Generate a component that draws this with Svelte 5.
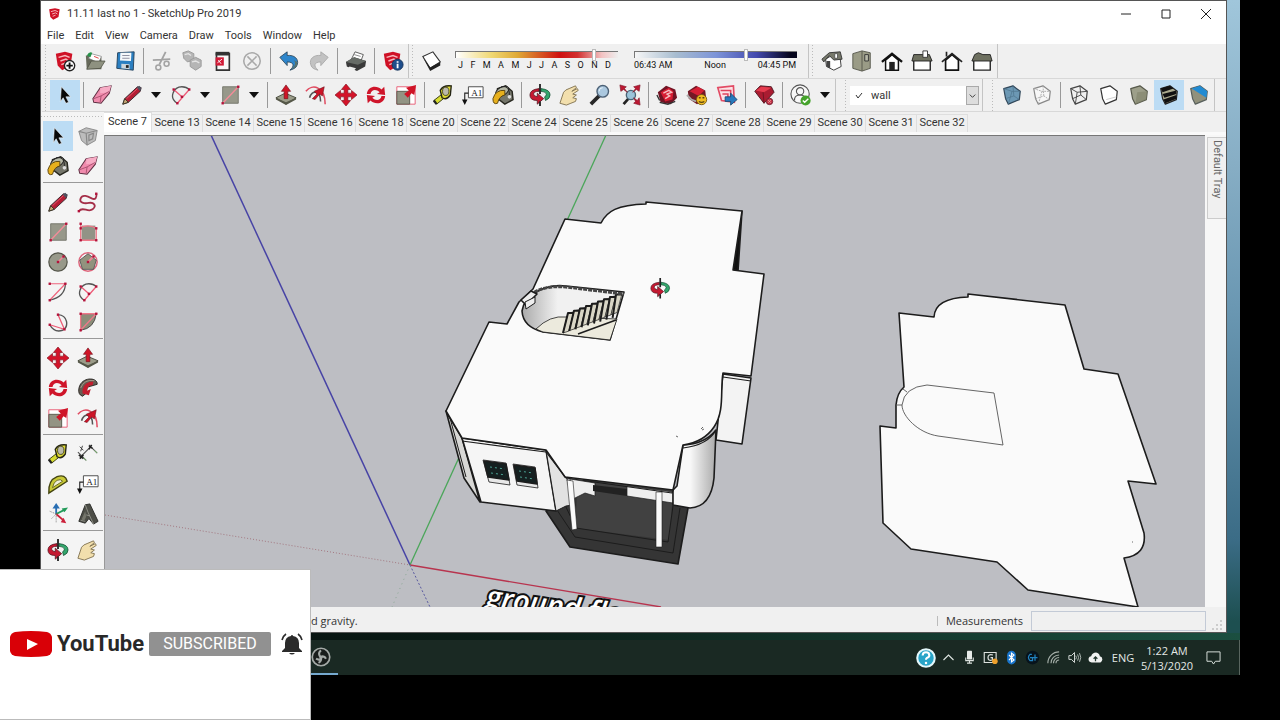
<script>
  let scene = $state('Scene 7');
  let month = $state(86);
  let hour = $state(69);
  let material = $state('wall');

  const menus = ['File', 'Edit', 'View', 'Camera', 'Draw', 'Tools', 'Window', 'Help'];
  const scenes = [7, 13, 14, 15, 16, 18, 20, 22, 24, 25, 26, 27, 28, 29, 30, 31, 32];
  const months = 'JFMAMJJASOND'.split('');

  // '|' is a separator, 'v' a drop-down arrow
  const standardBar = ['new', 'open', 'save', '|', 'cut', 'copy', 'paste', 'erase', '|', 'undo', 'redo', '|', 'print', '|', 'info'];
  const viewBar = ['iso', 'top', 'front', 'right', 'back', 'left'];
  const mainBar = [
    'select', '|', 'eraser', 'pencil', 'v', 'arc2', 'v', 'rect', 'v', '|',
    'push', 'offset', 'move', 'rotate', 'scale', '|', 'tape', 'text', 'paint', '|',
    'orbit', 'pan', 'zoom', 'extents', '|', 'warehouse', 'extwarehouse', 'layout', '|', 'extmanager', '|', 'account', 'v'
  ];
  const styleBar = ['xray', 'backedges', '|', 'wireframe', 'hidden', 'shaded', 'textured', 'mono'];
  const toolbox = [
    ['select', 'component', 'paint', 'eraser'],
    ['pencil', 'freehand', 'rect', 'rotrect', 'circle', 'polygon', 'arc', 'arc2', 'arc3', 'pie'],
    ['move', 'push', 'rotate', 'follow', 'scale', 'offset'],
    ['tape', 'dimension', 'protractor', 'text', 'axes', 'text3d'],
    ['orbit', 'pan']
  ];
  const active = ['select', 'textured'];

  const dots = (list) => list.map(([x, y]) => `<rect x="${x - 1.3}" y="${y - 1.3}" width="2.6" height="2.6" fill="#b3123a"/>`).join('');
  const cube = (fill, stroke, extra = '') =>
    `<path d="M3 5 13 2 21 8 20 17 8 22 5 16Z" fill="${fill}" stroke="${stroke}" stroke-width="1.3" stroke-linejoin="round"/>${extra}`;
  const suLogo = '<path d="M2 4 12 2 20 4 18 17 9 22 4 17Z" fill="#cf1126"/><path d="M5 8 12 6 17 8M7 12 13 10 16 12M8 16 13 14" fill="none" stroke="#f6b8bd" stroke-width="1.6"/>';

  const icons = {
    logo: suLogo,
    new: suLogo + '<circle cx="17" cy="17" r="5.6" fill="#fff" stroke="#222" stroke-width="1.5"/><path d="M13.5 17h7M17 13.5v7" stroke="#111" stroke-width="2"/>',
    open: '<path d="M2 6h6l2 2h9v13H3Z" fill="#66695a"/><path d="M5 9 8 4l11 3-3 7Z" fill="#fff" stroke="#777" stroke-width=".7"/><path d="M3 6q3-5 6-3l-2 5Z" fill="#28924a"/><path d="M3 21 8 12h15l-5 8Z" fill="#8e9180" stroke="#4b4d40" stroke-width=".8"/><path d="m11 7 5 2" stroke="#d33" />',
    save: '<path d="M4 3 22 2 21 22 3 20Z" fill="#2b7fc1" stroke="#24415a"/><path d="M7 3h12l-.5 9-12-.5Z" fill="#f5f8fa"/><path d="M9 6h8M9 9h8" stroke="#889"/><path d="m8 15 9 .5V21l-9-1Z" fill="#cdd6dc"/><path d="M13 16.500h3v3h-3Z" fill="#222"/>',
    cut: '<path d="M16 2 9 16M2 11l19-1" stroke="#a3a3a3" stroke-width="2"/><circle cx="8" cy="19" r="2.700" fill="none" stroke="#a3a3a3" stroke-width="1.700"/><circle cx="17" cy="15" r="2.700" fill="none" stroke="#a3a3a3" stroke-width="1.700"/>',
    copy: '<path d="m2 3 6-2 6 3v7l-7 2-4-4Z" fill="#b5b5b5" stroke="#999"/><path d="m10 11 6-3 6 3v7l-6 4-6-4Z" fill="#b5b5b5" stroke="#999"/><path d="m4 5 4-1 3 2M12 13l4-1 4 2" stroke="#e4e4e4" fill="none" stroke-width="1.500"/>',
    paste: '<path d="M6 4h14v18H6Z" fill="#f8f8f8" stroke="#333" stroke-width="1.800"/><path d="M5 2h15v4H5Z" fill="#333"/><path d="M5 8h9v9H5Z" fill="#d01a36"/><path d="m7 14 5-4m-4 1 3 4" stroke="#fff"/>',
    erase: '<circle cx="12" cy="12" r="9" fill="none" stroke="#a9a9a9" stroke-width="1.700"/><path d="m7 7 10 10M17 7 7 17" stroke="#a9a9a9" stroke-width="1.700"/>',
    undo: '<path d="m2 8 8-6v4c8-1 13 4 11 10-1 4-5 5-8 6 5-4 5-9-3-9v4Z" fill="#2e86cc" stroke="#2b4456" stroke-width=".9"/><path d="M14 21c5-3 6-7 3-10l4 2q1 6-7 8Z" fill="#56726f"/>',
    redo: '<path d="m22 8-8-6v4C6 5 1 10 3 16c1 4 4 5 8 6-5-4-5-9 3-9v4Z" fill="#c2c2c2" stroke="#aaa"/>',
    print: '<path d="m7 10 4-8 9 3-3 8Z" fill="#fff" stroke="#555"/><path d="m1 13 9-5 13 4-1 6-9 5-11-5Z" fill="#3a3a3a"/><path d="m1 13 9-5 13 4-9 4Z" fill="#666b66"/><path d="m5 18 7 2-2 2-7-2Z" fill="#eee"/><path d="m10 5 7 2" stroke="#888"/>',
    info: suLogo + '<circle cx="17" cy="16" r="6" fill="#1f4e8c" stroke="#17335a"/><path d="M17 12.200v1.800M17 15v5" stroke="#fff" stroke-width="2"/>',
    shadow: '<path d="m2 7 11-5 8 11-11 7Z" fill="#fff" stroke="#333" stroke-width="1.200"/><path d="m2 8 8 11 11-6v4l-11 6Z" fill="#222"/>',
    iso: '<path d="m5 10 1 8 8 4 8-4-1-8-6-6Z" fill="#fff" stroke="#333"/><path d="M1 10 9 3l12-1 2 8-9 1-5-5-6 7Z" fill="#77796b" stroke="#333"/><path d="M6 12h4v8l-4-2Z" fill="#444"/><path d="M15 4h3v5h-3Z" fill="#fff" stroke="#444" stroke-width=".8"/>',
    top: '<path d="M2 4 12 1l9 2v17l-9 3-10-3Z" fill="#9a9b86" stroke="#55564a"/><path d="M12 1v22" stroke="#55564a"/><path d="M15 5h4v7h-4Z" fill="#b8b9a8" stroke="#333"/>',
    front: '<path d="M5 11v11h14V11l-7-6Z" fill="#fff" stroke="#111" stroke-width="1.600"/><path d="m1 13 11-9 11 9" fill="none" stroke="#111" stroke-width="2.500"/><path d="M9 13h6v9H9Z" fill="#222"/>',
    right: '<path d="M3 11h18v11H3Z" fill="#fff" stroke="#222" stroke-width="1.500"/><path d="m1 12 2-7h17l3 7Z" fill="#6e7060" stroke="#222"/><path d="M13 1h5v7h-5Z" fill="#fff" stroke="#333"/>',
    back: '<path d="M5 11v11h14V11l-7-6Z" fill="#fff" stroke="#111" stroke-width="1.800"/><path d="m1 13 11-9 11 9M6 7V2" fill="none" stroke="#222" stroke-width="1.800"/>',
    left: '<path d="M3 11h18v11H3Z" fill="#fff" stroke="#222" stroke-width="1.500"/><path d="m1 12 3-7 4-2 5 2h8l2 7Z" fill="#6e7060" stroke="#222"/>',
    select: '<path d="m8 3 10 11h-5l3 6-3 1-3-6-3 4Z" fill="#080808" stroke="#fff" stroke-width=".6"/>',
    eraser: '<path d="m2 16 8-12 12-2-2 8-9 11-8-1Z" fill="#f08bad" stroke="#5f3043" stroke-width="1.100"/><path d="m10 4 12-2-2 7-10 1Z" fill="#f7acc5"/><path d="m3 16 8-3M10 20l1-7 9-5" stroke="#a8506f" fill="none"/>',
    pencil: '<path d="m2 22 2-6L18 3l4 1-1 4L8 20Z" fill="#b51d34" stroke="#35252a"/><path d="m2 22 2-6 4 4Z" fill="#c9a878" stroke="#332"/><path d="m17 4 4 4 1-4-2-2Z" fill="#4f5260"/><path d="m6 16 12-11" stroke="#e25a6c"/>',
    arc2: '<path d="M8 21C-2 15 4 3 13 3q5 0 8 3" fill="none" stroke="#555" stroke-width="1.400"/><path d="m4 6 9 8M8 21 21 6" stroke="#ee5c78" stroke-width="1.400"/>' + dots([[4, 6], [21, 6], [8, 21], [13, 14]]),
    rect: '<path d="M4 3h17v18H4Z" fill="#97988a" stroke="#74756a"/><path d="M4 21 21 3" stroke="#f38c98" stroke-width="1.500"/>' + dots([[4, 21], [21, 3]]),
    push: '<path d="m1 15 10-5 12 5-11 7Z" fill="#9b9c89" stroke="#44463a"/><path d="m1 15 11 5 11-5v2l-11 6-11-6Z" fill="#555748"/><path d="M12 1 7 8h3v8h4V8h3Z" fill="#cf1527" stroke="#74101a" stroke-width=".7"/>',
    offset: '<path d="M1 8C8-1 22 3 22 22" fill="none" stroke="#e04b60" stroke-width="1.700"/><path d="M5 15c2-9 12-8 12 4" fill="none" stroke="#555" stroke-width="1.700"/><path d="m8 16 5-5-3-3 11-5-2 10-3-2-5 6Z" fill="#cc1427" stroke="#650b18" stroke-width=".6"/>',
    move: '<path d="m12 0 5 6h-3v4h4V7l6 5-6 5v-3h-4v4h3l-5 6-5-6h3v-4H6v3l-6-5 6-5v3h4V6H7Z" fill="#d41329" stroke="#801320" stroke-width=".7"/>',
    rotate: '<path d="M2 11C3 2 13 1 18 6l3-3 1 9-9-1 3-2C12 5 7 6 6 11Z" fill="#cf152a"/><path d="M22 13c-1 9-11 10-16 5l-3 3-1-9 9 1-3 2c4 4 9 3 10-2Z" fill="#cf152a"/>',
    scale: '<path d="M2 3h20v19H2Z" fill="#fff" stroke="#e85a73"/><path d="M2 8h14v14H2Z" fill="#939484" stroke="#565749"/><path d="m10 11 5-4-3-3 11-3-2 11-3-2-4 5Z" fill="#cf1427"/>',
    tape: '<path d="m2 18 9-7 4 3-10 8Z" fill="#d6dc31" stroke="#33340b"/><path d="M9 7q3-6 12-5l-1 10q-4 6-9 3Z" fill="#deda33" stroke="#252515" stroke-width="1.500"/><ellipse cx="15" cy="8" rx="3.500" ry="4.500" fill="#bbb9aa" stroke="#43431f"/><path d="m2 18 3 4" stroke="#222" stroke-width="2.500"/>',
    text: '<path d="M7 3h16v12H7Z" fill="#fff" stroke="#444"/><path d="M7 10H3v9" fill="none" stroke="#222" stroke-width="1.200"/><path d="m0 17 3 6 3-6Z" fill="#111"/><text x="10" y="13" font-family="Liberation Serif, serif" font-size="10" fill="#222">A1</text>',
    paint: '<path d="m6 5 9-3 7 6 1 9-9 5-9-7Z" fill="#74756a" stroke="#282820" stroke-width="1.500"/><ellipse cx="11" cy="8" rx="8" ry="4.500" fill="#b5b7a6" stroke="#222" transform="rotate(-30 11 8)"/><path d="M14 7Q4 6 1 16q0 7 5 5 2-8 8-9Z" fill="#e7b01d" stroke="#56410d"/><path d="M10 3q10-2 9 11" fill="none" stroke="#222"/><circle cx="19" cy="14" r="2" fill="#ddd"/>',
    orbit: '<path d="M11 5Q1 6 1 12t8 6v4l7-6-7-6v4q-4-1-4-3 0-3 6-3Z" fill="#c51931" stroke="#501520" stroke-width=".8"/><path d="M13 5q10 1 10 7 0 4-5 6l-1-4q2-1 2-3-1-3-6-3Z" fill="#33a66c" stroke="#124b30" stroke-width=".8"/><path d="M12 0v11M12 19v5" stroke="#222" stroke-width="2"/>',
    pan: '<path d="m1 21 4-12Q7 6 11 5l7-3 1 2-5 4 6-3 1 2-6 4 4 1-4 3 4 1-1 3-5 2-5 2Z" fill="#f2dfad" stroke="#807250" stroke-width="1"/>',
    zoom: '<path d="m2 22 9-9" stroke="#282828" stroke-width="4"/><circle cx="15" cy="8" r="6.300" fill="#abc8df" stroke="#4c6176" stroke-width="1.500"/><path d="M11 8q0-4 4-4" stroke="#e9f4fb" fill="none"/>',
    extents: '<path d="M5 22 12 14" stroke="#222" stroke-width="3"/><circle cx="13" cy="12" r="5" fill="#9bc3d9" stroke="#496477" stroke-width="1.500"/><path d="m1 1 7 2-2 2 3 4-4-3-3 2ZM23 1l-7 2 2 2-3 4 4-3 3 2ZM23 23l-7-2 2-2-2-4 4 3 2-3Z" fill="#bd1832" stroke="#7f1628" stroke-width=".7"/>',
    warehouse: '<path d="m2 9 9-7 10 4 2 9-7 7-11-2Z" fill="#711323"/><path d="m5 9 9-5 5 4-1 9-8 2Z" fill="#d71c32"/><path d="m8 10 6-3 3 2-5 2 3 2-5 3" fill="none" stroke="#f5bdc0" stroke-width="1.500"/><path d="m4 20 9 2 8-3M1 12l3 6" stroke="#333" fill="none" stroke-width="1.500"/>',
    extwarehouse: '<path d="m2 8 9-6 10 5 1 9-10 6-9-6Z" fill="#731825"/><path d="m4 8 9-5 7 4-6 6Z" fill="#d71f35"/><path d="m1 12 5 5 5 2" stroke="#aaa" stroke-width="2" fill="none"/><circle cx="17" cy="17" r="5.600" fill="#f0bc22" stroke="#765b15"/><path d="M14 15h2m2 0h2M14 19q3 2 6 0" stroke="#5b4510" stroke-width="1.400" fill="none"/>',
    layout: '<path d="M2 4 19 2l1 18-14-2Z" fill="#fbe3e6" stroke="#e24b64" stroke-width="1.800"/><path d="M5 7h11v8M7 11h6v5" fill="none" stroke="#df445d" stroke-width="1.700"/><path d="M10 14h6v-4l7 7-7 6v-4h-6Z" fill="#2879bd" stroke="#204b75"/>',
    extmanager: '<path d="m2 8 6-6 12 1 3 6-11 12Z" fill="#aa1c31" stroke="#48151f"/><path d="m3 7 6-4 11 1-8 5Z" fill="#e53b4e"/><path d="m11 9 1 12" stroke="#6f1322"/><circle cx="18" cy="19" r="3.500" fill="#c73248" stroke="#702332"/><path d="m16.500 17.500 3 3m0-3-3 3" stroke="#e99"/>',
    account: '<circle cx="11" cy="11" r="10" fill="#f8f8f8" stroke="#555" stroke-width="1.200"/><circle cx="11" cy="8" r="4" fill="none" stroke="#555" stroke-width="1.200"/><path d="M5 18v-2q1-4 6-4t6 4v2" fill="none" stroke="#555" stroke-width="1.200"/><circle cx="17" cy="18" r="5.500" fill="#45a32b"/><path d="m14 18 2 2 4-4" fill="none" stroke="#fff" stroke-width="1.500"/>',
    xray: cube('#6c98b4', '#32485a', '<path d="m3 5 9 3 9 0M12 8l-4 14M5 16l9-3 6 4M13 2l1 11" fill="none" stroke="#4f768e" stroke-width=".8"/>'),
    backedges: cube('#f7f7f7', '#888', '<path d="m3 5 9 3 9 0M12 8l-4 14M5 16l9-3 6 4M13 2l1 11" fill="none" stroke="#aaa" stroke-dasharray="2 1"/>'),
    wireframe: cube('none', '#444', '<path d="m3 5 7 4 11-1M10 9 8 22M5 16l9-4 6 5M13 2l1 10" fill="none" stroke="#444"/>'),
    hidden: cube('#fff', '#333', '<path d="m9 17 11-3" stroke="#ccc"/>'),
    shaded: cube('#9d9f8a', '#57594b', '<path d="m10 9 11-1-1 9-12 5Z" fill="#85876f" opacity=".7"/>'),
    textured: cube('#aaa98d', '#222', '<path d="m3 5 10-3 4 3-12 4ZM5 11l15-4v4L7 15ZM6 17l14-5v4L8 21Z" fill="#111"/>'),
    mono: cube('#91917c', '#58605d', '<path d="m4 5 9-3 8 6-1 7Z" fill="#228bd2"/>'),
    component: '<path d="m2 7 8-4 12 3-2 11-9 5-6-5Z" fill="#bcbcbc" stroke="#888"/><path d="m2 7 8 2 12-3M10 9l1 13M13 11l5-2-1 6-4 2Z" fill="none" stroke="#888" stroke-width="1.300"/>',
    freehand: '<path d="M2 22C6 16 12 24 17 20s1-8-4-7-11 0-9-5 8-2 12 0 6-1 5-5" fill="none" stroke="#a52f49" stroke-width="2"/>' + dots([[2, 22], [21, 3]]),
    rotrect: '<path d="M5 5h15v16H5Z" fill="#929386"/><path d="M4 3v18h17V8Q13 3 4 7" fill="none" stroke="#ee7889" stroke-width="1.400"/>' + dots([[4, 3], [4, 8], [4, 21], [21, 21], [21, 8]]),
    circle: '<circle cx="12" cy="12" r="10" fill="#98998a" stroke="#55564b" stroke-width="1.300"/><path d="m12 12 6-6" stroke="#f28897" stroke-width="1.500"/>' + dots([[12, 12], [18, 6]]),
    polygon: '<circle cx="12" cy="12" r="10" fill="none" stroke="#de667c" stroke-width="1.600"/><path d="m12 3 9 7-3 10H6L3 10Z" fill="#92937e" stroke="#555"/><path d="m12 12 6-6" stroke="#f08493" stroke-width="2"/>' + dots([[12, 12], [18, 6]]),
    arc: '<path d="M3 21Q20 17 20 3" fill="none" stroke="#555" stroke-width="1.400"/><path d="M3 3h17L3 21" fill="none" stroke="#ee647c" stroke-width="1.300"/>' + dots([[3, 3], [20, 3], [3, 21]]),
    arc3: '<path d="M3 15q5 9 14 6c7-4 6-16-5-17" fill="none" stroke="#555" stroke-width="1.500"/><path d="M12 4 19 20 3 15" fill="none" stroke="#ed5c75" stroke-width="1.400"/>' + dots([[12, 4], [19, 20], [3, 15]]),
    pie: '<path d="M4 3h17Q19 19 4 21Z" fill="#8c8d79" stroke="#444"/><path d="M4 21 21 3H4Z" fill="none" stroke="#ee7989" stroke-width="1.500"/>' + dots([[4, 3], [21, 3], [4, 21]]),
    follow: '<path d="M2 13C4-1 23 0 22 8l-7 2q-6 1-4 7l-5 4q-5-2-4-8Z" fill="#655e54" stroke="#252320"/><path d="M6 14Q8 5 18 5l-1 4Q11 9 11 15l4-2-2 7-7-2Z" fill="#c31c2e"/><path d="M4 12Q8 2 19 4" fill="none" stroke="#a89b8b"/>',
    dimension: '<path d="m4 15 11-11M1 10l9 9M13 2l9 9" stroke="#555" stroke-width="1.200"/><path d="m2 13 5 4M3 17l4-4M13 3l4 3m-4 1 3-5" stroke="#222" stroke-width="1.700"/><path d="m19 8 3 3M7 16l3 3" stroke="#75b968"/><path d="m3 4 4 4M6 3 4 9" stroke="#333"/>',
    protractor: '<path d="M2 22 22 9Q20 1 11 4 1 8 2 22Z" fill="#c8c937" stroke="#424310" stroke-width="1.500"/><path d="M6 16 17 9q-2-3-6-1t-5 8Z" fill="#f0f0d8" stroke="#626318"/>',
    axes: '<path d="M10 12V3" stroke="#286eb3" stroke-width="2"/><path d="m10 12 10-5" stroke="#229b59" stroke-width="2"/><path d="m10 12 8 7" stroke="#cc213a" stroke-width="2"/><path d="M10 0 6 6h8Z" fill="#286eb3"/><path d="m23 5-7 1 3 4Z" fill="#229b59"/><path d="m21 22-6-1 3-5Z" fill="#cc213a"/><path d="m3 9 7 3-5 5M10 12v9" stroke="#777" stroke-dasharray="1 1" fill="none"/>',
    text3d: '<path d="m9 2 5-1 9 19-5 3-5-6-4 5-7-2Z" fill="#4d4e47" stroke="#2a2b27"/><path d="m9 2 3 8 6 13M10 13l4 1M4 19l5 1" stroke="#92938a" fill="none"/><path d="m9 9-4 9 3 1 2-4Z" fill="#74756b"/>'
  };

  const trayIcons = {
    'Get Help': '<circle cx="12" cy="12" r="10.500" fill="#28a4c8" stroke="#e4f7fb" stroke-width="2.500"/><path d="M8 9q0-4 4-4t4 4q0 2-3 3-1 .8-1 2" fill="none" stroke="#fff" stroke-width="2.500"/><circle cx="12" cy="18" r="1.500" fill="#fff"/>',
    'Show hidden icons': '<path d="m4 16 8-8 8 8" fill="none" stroke="#dfe6e2" stroke-width="1.800"/>',
    'Microphone': '<rect x="8" y="1" width="8" height="14" rx="1" fill="#e7ebe8"/><path d="M6 12v5h12v-5M12 16v6M8 21h8" fill="none" stroke="#dce1de" stroke-width="1.800"/>',
    'Screen capture': '<path d="M2 4h19v16H2Z" fill="none" stroke="#dce1de" stroke-width="1.800"/><path d="M16 8q-8-2-8 4t7 4v-4h-3" fill="none" stroke="#dce1de" stroke-width="2"/><circle cx="19" cy="18" r="4.500" fill="#eda02c"/>',
    'Bluetooth': '<rect x="5" y="1" width="14" height="22" rx="7" fill="#1975cc"/><path d="m8 8 8 8-4 3V5l4 3-8 8" fill="none" stroke="#fff" stroke-width="1.800"/>',
    'Logitech G': '<circle cx="12" cy="12" r="11" fill="#07131c"/><path d="M11 7H8q-5 5 0 10h4v-5H8M16 7v10M12 12h8" fill="none" stroke="#2182be" stroke-width="2"/>',
    'Network': '<path d="M3 21A18 18 0 0 1 21 3M8 21A13 13 0 0 1 21 8M12 21a9 9 0 0 1 9-9M16 21a5 5 0 0 1 5-5" fill="none" stroke="#a5afa9" stroke-width="1.800"/>',
    'Volume': '<path d="M3 9h4l5-5v16l-5-5H3Z" fill="none" stroke="#dce1de" stroke-width="1.500"/><path d="M14 9q2 3 0 6M17 7q3 5 0 10M20 5q4 7 0 14" fill="none" stroke="#cdd5d0" stroke-width="1.300"/>',
    'Cloud sync': '<path d="M6 20q-6-1-5-7 1-3 4-3 2-6 8-6 5 1 6 6 4 1 4 5-1 5-5 5Z" fill="#f0f2f1"/><path d="M12 18v-7m-3 3 3-3 3 3" fill="none" stroke="#22362e" stroke-width="2"/>'
  };

  // treads of the stair, bottom to top
  const steps = Array.from({ length: 9 }, (_, i) => ({
    x: 568 + i * 6,
    y: 313 - i * 2.3,
    foot: 563 + i * 6.2,
    base: 333 - i * 1.9
  }));
</script>

{#snippet icon(name)}
  <svg class="icon" viewBox="0 0 24 24" aria-hidden="true">{@html icons[name]}</svg>
{/snippet}

{#snippet tools(list)}
  {#each list as item}
    {#if item === '|'}
      <span class="separator"></span>
    {:else if item === 'v'}
      <button class="more" aria-label="More tools"><svg viewBox="0 0 10 6"><path d="M0 0h10L5 6Z" /></svg></button>
    {:else}
      <button class="tool" class:active={active.includes(item)} aria-label={item}>{@render icon(item)}</button>
    {/if}
  {/each}
{/snippet}

<div class="screen">
  <div class="desktop">
    <main class="window">
      <header class="titlebar">
        {@render icon('logo')}
        <h1>11.11 last no 1 - SketchUp Pro 2019</h1>
        <div class="controls">
          <button aria-label="Minimize"><svg viewBox="0 0 10 10"><path d="M0 5h10" /></svg></button>
          <button aria-label="Maximize"><svg viewBox="0 0 10 10"><path d="M1 1h8v8H1Z" /></svg></button>
          <button aria-label="Close"><svg viewBox="0 0 10 10"><path d="m0 0 10 10M10 0 0 10" /></svg></button>
        </div>
      </header>

      <nav class="menubar">
        {#each menus as menu}
          <button>{menu}</button>
        {/each}
      </nav>

      <div class="toolbars">
        <div class="bar">
          <div class="group">{@render tools(standardBar)}</div>
          <div class="group shadows">
            {@render tools(['shadow'])}
            <label class="slider">
              <input class="date" type="range" aria-label="Date" bind:value={month} />
              <span class="scale months">{#each months as m}<span>{m}</span>{/each}</span>
            </label>
            <label class="slider">
              <input class="time" type="range" aria-label="Time" bind:value={hour} />
              <span class="scale"><span>06:43 AM</span><span>Noon</span><span>04:45 PM</span></span>
            </label>
          </div>
          <div class="group">{@render tools(viewBar)}</div>
        </div>
        <div class="bar second">
          <div class="group">{@render tools(mainBar)}</div>
          <div class="group">
            <div class="combo">
              <select aria-label="Tag" bind:value={material}>
                <option>wall</option>
              </select>
              <svg class="check" viewBox="0 0 8 8"><path d="m1 4 2 3 4-5" /></svg>
              <svg class="chevron" viewBox="0 0 12 18"><path d="m3 8 3 3 3-3" /></svg>
            </div>
          </div>
          <div class="group">{@render tools(styleBar)}</div>
        </div>
      </div>

      <div class="workspace">
        <aside class="toolbox">
          {#each toolbox as section}
            <div class="section">{@render tools(section)}</div>
          {/each}
        </aside>

        <section class="document">
          <div class="tabs" role="tablist">
            {#each scenes as n}
              <button role="tab" aria-selected={scene === `Scene ${n}`} onclick={() => (scene = `Scene ${n}`)}>Scene {n}</button>
            {/each}
          </div>
          <div class="canvas-row">
            <svg class="viewport" viewBox="105 136 1100 471" preserveAspectRatio="xMidYMid slice" role="img" aria-label="Model">
              <defs>
                <linearGradient id="round" x1="0" x2="1"><stop offset=".4" stop-color="#f8f8f8" /><stop offset="1" stop-color="#aaa" /></linearGradient>
                <linearGradient id="well" x1="0" x2="1"><stop offset="0" stop-color="#aaa" /><stop offset=".35" stop-color="#f1f1f1" /></linearGradient>
              </defs>
              <g fill="none">
                <path d="M211 135 410 565" stroke="#4743a5" stroke-width="1.5" />
                <path d="M606 135 410 565" stroke="#4ba65a" stroke-width="1.3" />
                <path d="M410 565 661 607" stroke="#b8344e" stroke-width="1.3" />
                <path d="M105 515 410 565" stroke="#a37780" stroke-dasharray="1 2" />
                <path d="m410 565 20 42" stroke="#5959a0" stroke-dasharray="2 2" />
                <path d="m410 565-18 42" stroke="#8aa894" stroke-dasharray="1 4" />
              </g>
              <text class="caption" x="485" y="606" transform="rotate(8 485 606)">ground floor</text>

              <g class="edges">
                <!-- porch -->
                <path d="m546 511 15-5 9-25 105 12 13 15-10 56-108-17Z" fill="#353535" />
                <path d="m577 496 8-18 87 12v15l-3 35-94-12Z" fill="#414141" stroke="none" />
                <path d="m570 479 25 4v13l-10-3-12 6Z" fill="#eee" stroke-width=".7" />
                <path d="m627 486 46 6v11l-46-7Z" fill="#eee" stroke-width=".7" />
                <path d="m593 485 34 4v7l-34-5Z" fill="#222" stroke="none" />
                <path d="m557 510 18 27 98 16 7-45M565 505l11 23 92 14 5-36" fill="none" stroke-width="1" />
                <!-- rounded corner and right block -->
                <path d="M683 445q22-1 33-15l-2 48q-3 29-24 30l-17-3v-15l4-4Z" fill="url(#round)" />
                <path d="m723 374 28 4-9 66-26-4Z" fill="#f3f3f3" />
                <path d="m742 211-4 60-5-1Z" fill="#111" />
                <!-- walls -->
                <path d="m446 411 16 27 18 64-16-24Z" fill="#d8d8d6" />
                <path d="m450 418 16 59" fill="none" stroke-width="1" />
                <path d="m462 438 84 12 10 61-75-9Z" fill="#f5f5f5" />
                <path d="m546 450 20 25 7 30-7 1-10 5Z" fill="#e2e2e2" stroke-width="1" />
                <!-- roof -->
                <path d="m565 219 36 4c6-12 16-18 45-19v-2l96 9-9 59 31 4-13 102-28-3c-3 17 2 38-9 54q-10 15-31 18l-10 45-108-13-19-27-84-12-16-27 43-89 18 2 12-22 14-13Z" fill="#fafafa" />
                <path d="m462 441 84 11 20 26 106 15 2-5M683 448q25-3 33-18M723 377l28 4" fill="none" stroke-width="1.2" />
                <!-- columns -->
                <path d="m567 480 6 1 4 48-5 1ZM656 492h6v55h-6Z" fill="#fafafa" stroke-width=".6" />
                <!-- windows -->
                <path d="m483 460 23 3 4 22-21-3ZM513 464l22 3 3 21-21-3Z" fill="#e8e8e8" stroke-width=".8" />
                <path d="m484 461 22 3 3 16-21-3ZM514 465l21 3 2 16-20-3Z" fill="#152020" />
                <path d="m490 467 15 2M491 473l15 2M519 471l14 2M520 477l14 2" stroke="#4ca394" stroke-width="1" stroke-dasharray="2 3" />
              </g>

              <!-- stairwell -->
              <g class="edges">
                <path d="M535 293q13-9 31-7l58 6-14 48-67-8q-20-5-21-21 2-12 13-18Z" fill="url(#well)" />
                <path d="M536 329q14-14 30-12l51 2-7 21-67-8Z" fill="#eceadd" stroke-width=".8" />
                {#each steps as s}
                  <path d="M{s.x} {s.y}l6-1-5 19-6 2Z" fill="#d9d6c6" stroke-width=".7" />
                  <path d="M{s.foot} {s.base}L{s.x} {s.y}h6" fill="none" stroke-width="2" />
                {/each}
                <path d="m578 334 38-14" fill="none" stroke-width="1.5" />
                <path d="M530 295q13-10 36-8l58 7" fill="none" stroke-width="3" stroke-dasharray="4 1" stroke="#444" />
                <path d="m521 300 10-9 6 3-11 11Z" fill="#eee" />
                <path d="m525 302 10-5v6l-9 6Z" fill="#eee" stroke-width="1" />
              </g>

              <!-- flat slab -->
              <g class="edges">
                <path d="m899 313 35 4q1-19 34-20v-3l97 11 19 64 34 5 38 110-28-3 16 52q3 22-20 25l14 49-110-17-31-28-86-13-28-26-3-97 16 2v-23q1-12 8-18Z" fill="#fafafa" />
                <path d="m927 385 67 8 9 52-65-9c-20-3-36-20-36-31q2-18 25-20ZM896 405h6M903 389l4 3" fill="none" stroke-width=".9" stroke="#555" />
              </g>
              <path d="m701 429 2-2m-1 3 2-1M676 436l2 1M1132 542h1" stroke="#666" />

              <!-- orbit cursor -->
              <g transform="translate(650 278) scale(.85)">{@html icons.orbit}</g>
            </svg>
            <aside class="tray"><button>Default Tray</button></aside>
          </div>
        </section>
      </div>

      <footer class="status">
        <span class="hint">d gravity.</span>
        <label for="measurements">Measurements</label>
        <input id="measurements" type="text" />
        <svg class="grip" viewBox="0 0 10 10"><path d="M8 0h2v2H8ZM8 4h2v2H8ZM4 4h2v2H4ZM8 8h2v2H8ZM4 8h2v2H4ZM0 8h2v2H0Z" /></svg>
      </footer>
    </main>

    <div class="taskbar">
      <button class="task" aria-label="OBS Studio">
        <svg viewBox="0 0 24 24">
          <circle cx="12" cy="12" r="10.500" fill="#191d1b" stroke="#a5aaa7" stroke-width="2" />
          <path d="M12 4q-4 3-1 8 5-2 7 2M6 14q5 3 7-2M12 12q1 5-3 7" fill="none" stroke="#a5aaa7" stroke-width="2.500" />
        </svg>
      </button>
      <div class="systray">
        {#each Object.entries(trayIcons) as [name, shape]}
          <button aria-label={name} class:big={name === 'Get Help'}><svg viewBox="0 0 24 24">{@html shape}</svg></button>
        {/each}
        <button class="lang">ENG</button>
        <button class="clock"><span>1:22 AM</span><span>5/13/2020</span></button>
        <button class="notify" aria-label="Notifications">
          <svg viewBox="0 0 16 16"><path d="M1 2h14v10H10l-2 3-2-3H1Z" /></svg>
        </button>
      </div>
    </div>
  </div>

  <div class="subscribe">
    <svg class="play" viewBox="0 0 42 26" aria-hidden="true">
      <path d="M5 1q16-2 32 0 4 1 5 5 1 7 0 14-1 4-5 5-16 2-32 0-4-1-5-5-1-7 0-14 1-4 5-5Z" fill="#d90007" />
      <path d="m17 8 11 5-11 6Z" fill="#fff" />
    </svg>
    <strong>YouTube</strong>
    <button class="subscribed">SUBSCRIBED</button>
    <button class="bell" aria-label="Notifications on">
      <svg viewBox="0 0 22 22">
        <path d="M11 2q1 0 1 1 6 1 6 7v5l3 3v1H1v-1l3-3v-5q0-6 6-7 0-1 1-1ZM8 20h6q-3 3-6 0Z" fill="#2b2b2b" />
        <path d="M1 7q1-4 4-6M21 7q-1-4-4-6" fill="none" stroke="#2b2b2b" stroke-width="1.600" />
      </svg>
    </button>
  </div>
</div>

<style>
  :global(body) {
    margin: 0;
    background: #000;
  }

  .screen {
    position: relative;
    box-sizing: border-box;
    min-height: 100vh;
    padding: 0 40px 45px;
    display: flex;
    background: #000;
    font-family: 'Open Sans', 'Noto Sans', sans-serif;
    font-size: 11px;
    color: #333;
  }

  button,
  select,
  input {
    font: inherit;
    color: inherit;
    margin: 0;
    padding: 0;
    border: 0;
    background: none;
  }

  svg {
    display: block;
  }

  .desktop {
    flex: 1;
    min-width: 0;
    display: flex;
    flex-direction: column;
    background:
      linear-gradient(to right, #040807, #0b1f19 40%, #1b4f40) bottom / 100% 42px no-repeat,
      linear-gradient(to bottom, #a0c6db 0, #86adc4 25%, #6b98b3 45%, #3b6c86 80%, #1d4f50 92%);
  }

  .window {
    flex: 1;
    display: flex;
    flex-direction: column;
    margin-right: 13px;
    border: 1px solid #555;
    background: #fff;
  }

  /* title and menus */
  .titlebar {
    display: flex;
    align-items: center;
    height: 25px;
    padding-left: 7px;
    font-family: Roboto, 'Liberation Sans', sans-serif;
  }

  .titlebar .icon {
    width: 14px;
    height: 14px;
  }

  h1 {
    margin: 0 0 0 5px;
    font-size: 11px;
    font-weight: 400;
  }

  .controls {
    display: flex;
    margin-left: auto;
  }

  .controls button {
    width: 40px;
    height: 24px;
    display: grid;
    place-items: center;
  }

  .controls svg {
    width: 10px;
    height: 10px;
    overflow: visible;
    fill: none;
    stroke: #222;
  }

  .menubar {
    display: flex;
    gap: 11px;
    height: 18px;
    padding-left: 6px;
    font-family: Roboto, 'Liberation Sans', sans-serif;
  }

  .menubar button {
    line-height: 20px;
  }

  /* toolbars */
  .toolbars {
    padding-left: 1px;
    background: #f0f0f0;
  }

  .bar {
    display: flex;
    height: 34px;
    border-bottom: 1px solid #d8d8d8;
  }

  .second {
    height: 32px;
    gap: 6px;
  }

  .group {
    display: flex;
    align-items: center;
    padding-left: 8px;
    border-right: 1px solid #c4c4c4;
    background: radial-gradient(circle, #bbb 1px, transparent 1px) 2px 0 / 3px 3px repeat-y;
  }

  .tool {
    flex: none;
    width: 30px;
    height: 30px;
    display: grid;
    place-items: center;
  }

  .tool.active {
    background: #bcdcf4;
  }

  .icon {
    width: 22px;
    height: 22px;
  }

  .more {
    width: 19px;
    height: 30px;
  }

  .more svg {
    width: 10px;
    height: 6px;
    margin-left: 4px;
    fill: #111;
  }

  .separator {
    width: 1px;
    height: 26px;
    margin: 0 3px;
    background: #999;
  }

  .shadows {
    padding-right: 12px;
  }

  .slider {
    display: flex;
    flex-direction: column;
    width: 162px;
    margin-left: 8px;
  }

  .slider + .slider {
    margin-left: 17px;
  }

  .slider input {
    appearance: none;
    width: 100%;
    height: 6px;
    border: 1px solid #777;
    border-width: 1px 0 0 1px;
  }

  .slider input::-webkit-slider-thumb {
    appearance: none;
    width: 4px;
    height: 12px;
    border: 1px solid #bbb;
    background: #fff;
  }

  .date {
    background: linear-gradient(to right, #fff, #f0d873 22%, #dfa936 38%, #cf1010 64%, #d23030 75%, #f3c3c3 90%, #eee);
  }

  .time {
    background: linear-gradient(to right, #f6f6f6, #a8bdd0 25%, #7d94d8 50%, #4349ae 75%, #05051c 96%);
  }

  .scale {
    display: flex;
    justify-content: space-between;
    margin-top: 2px;
    font: 9px/11px Roboto, 'Liberation Sans', sans-serif;
    color: #111;
  }

  .months {
    padding: 0 6px 0 3px;
  }

  .combo {
    display: grid;
    align-items: center;
    width: 129px;
    height: 19px;
    margin-right: 3px;
    background: #fff;
  }

  .combo > * {
    grid-area: 1 / 1;
  }

  .combo select {
    appearance: none;
    width: 100%;
    height: 19px;
    padding-left: 21px;
    font-family: Roboto, 'Liberation Sans', sans-serif;
  }

  .combo svg {
    fill: none;
    stroke: #333;
    pointer-events: none;
  }

  .check {
    width: 8px;
    margin-left: 5px;
  }

  .chevron {
    justify-self: end;
    box-sizing: border-box;
    width: 13px;
    height: 19px;
    border: 1px solid #aaa;
    background: #ddd;
  }

  /* workspace */
  .workspace {
    flex: 1;
    display: flex;
    min-height: 0;
  }

  .toolbox {
    width: 60px;
    padding: 9px 1px 0 2px;
    background: radial-gradient(circle, #bbb 1px, transparent 1px) 2px 3px / 3px 3px repeat-x #f4f4f4;
  }

  .section {
    display: grid;
    grid-template-columns: 1fr 1fr;
  }

  .section + .section {
    border-top: 1px solid #999;
    margin-top: 1px;
    padding-top: 4px;
  }

  .document {
    flex: 1;
    min-width: 0;
    display: flex;
    flex-direction: column;
  }

  .tabs {
    display: flex;
    align-items: end;
    height: 20px;
    border-bottom: 3px solid #fafafa;
    background: #f0f0f0;
    font-family: Roboto, 'Liberation Sans', sans-serif;
  }

  .tabs button {
    box-sizing: border-box;
    width: 51px;
    height: 18px;
    padding-bottom: 2px;
    border: 1px solid #dedede;
    border-width: 1px 1px 0 0;
    white-space: nowrap;
  }

  .tabs button[aria-selected='true'] {
    width: 48px;
    height: 20px;
    background: #fff;
  }

  .canvas-row {
    flex: 1;
    display: flex;
    min-height: 0;
  }

  .viewport {
    flex: 1;
    min-width: 0;
    height: 0;
    min-height: 100%;
    box-sizing: border-box;
    border-top: 1px solid #777;
    border-left: 1px solid #999;
    background: #bdbec3;
  }

  .edges path {
    stroke-linejoin: round;
  }

  .edges {
    stroke: #1c1c1c;
    stroke-width: 1.6;
  }

  .caption {
    font: italic 600 29px 'Open Sans', sans-serif;
    fill: #fff;
    stroke: #111;
    stroke-width: 4;
    paint-order: stroke;
  }

  .tray {
    width: 19px;
    padding: 2px 0 0 2px;
    background: #f7f7f7;
  }

  .tray button {
    width: 19px;
    height: 82px;
    box-sizing: border-box;
    padding: 2px 0;
    border: 1px solid #ccc;
    border-right: 0;
    background: #f0f0f0;
    font-family: Roboto, 'Liberation Sans', sans-serif;
    writing-mode: vertical-rl;
    text-align: left;
    line-height: 18px;
    color: #666;
  }

  .status {
    display: flex;
    align-items: center;
    height: 23px;
    padding: 2px 4px 0 0;
    background: #f0f0f0;
  }

  .hint {
    flex: 1;
    padding-left: 270px;
  }

  .status label {
    padding: 0 8px;
    border-left: 1px solid #bbb;
    line-height: 10px;
  }

  .status input {
    box-sizing: border-box;
    width: 175px;
    height: 20px;
    border: 1px solid #c3cad6;
  }

  .grip {
    align-self: end;
    width: 10px;
    height: 10px;
    margin: 0 0 2px 6px;
    fill: #ccc;
  }

  /* taskbar */
  .taskbar {
    display: flex;
    justify-content: space-between;
    height: 35px;
    margin-top: 7px;
    padding-left: 263px;
    border-right: 1px solid #59655f;
    background: #1a2923;
    color: #e3e8e5;
  }

  .task {
    width: 35px;
    display: grid;
    place-items: center;
    border-bottom: 2px solid #76a9cf;
  }

  .task svg {
    width: 20px;
  }

  .systray {
    display: flex;
    align-items: center;
    padding-right: 18px;
  }

  .systray svg {
    width: 15px;
    margin: auto;
  }

  .systray button {
    width: 21px;
  }

  .systray .big {
    width: 24px;
  }

  .systray .big svg {
    width: 20px;
  }

  .systray .lang {
    width: 34px;
  }

  .systray .clock {
    display: flex;
    flex-direction: column;
    align-items: center;
    width: 54px;
    line-height: 15px;
  }

  .systray .notify {
    width: 16px;
    margin-left: 11px;
  }

  .notify path {
    fill: none;
    stroke: #dfe6e2;
  }

  /* video overlay */
  .subscribe {
    position: absolute;
    left: 0;
    bottom: 0;
    box-sizing: border-box;
    width: 311px;
    height: 151px;
    padding: 0 6px 2px 10px;
    display: flex;
    align-items: center;
    border: 1px solid #bbb;
    border-left: 0;
    background: #fff;
  }

  .play {
    width: 42px;
    height: 26px;
  }

  .subscribe strong {
    width: 92px;
    margin-left: 5px;
    font: 700 22px/28px Roboto, sans-serif;
    color: #282828;
  }

  .subscribed {
    width: 122px;
    height: 24px;
    border-radius: 2px;
    background: #919191;
    color: #fff;
    font: 16px/24px Roboto, sans-serif;
  }

  .bell {
    margin-left: 10px;
  }

  .bell svg {
    width: 22px;
    height: 22px;
  }
</style>
